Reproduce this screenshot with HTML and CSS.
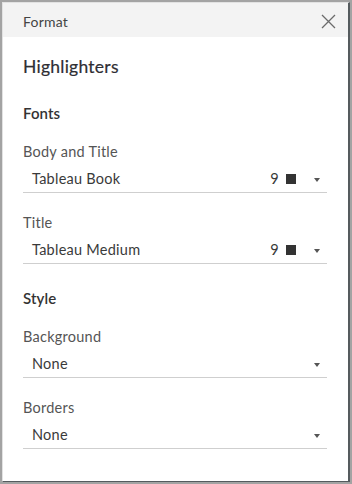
FILE: index.html
```html
<!DOCTYPE html>
<html lang="en">
<head>
  <meta charset="UTF-8" />
  <title>Format</title>
  <link rel="stylesheet" href="styles.css">
</head>
<body>

<div class="panel">
  <div class="header">
    <span class="header-title">Format</span>
    <button class="close-btn" title="Close">
      <svg width="15" height="15" viewBox="0 0 15 15"><path d="M1 1 L14 14 M14 1 L1 14" stroke="#6b6b6b" stroke-width="1.3" fill="none"/></svg>
    </button>
  </div>

  <div class="content">
    <h1>Highlighters</h1>

    <h2>Fonts</h2>

    <div class="field">
      <label>Body and Title</label>
      <div class="dropdown">
        <span class="value">Tableau Book</span>
        <span class="size">9</span>
        <span class="swatch"></span>
        <span class="caret"></span>
      </div>
    </div>

    <div class="field">
      <label>Title</label>
      <div class="dropdown">
        <span class="value">Tableau Medium</span>
        <span class="size">9</span>
        <span class="swatch"></span>
        <span class="caret"></span>
      </div>
    </div>

    <h2>Style</h2>

    <div class="field">
      <label>Background</label>
      <div class="dropdown">
        <span class="value">None</span>
        <span class="caret"></span>
      </div>
    </div>

    <div class="field">
      <label>Borders</label>
      <div class="dropdown">
        <span class="value">None</span>
        <span class="caret"></span>
      </div>
    </div>
  </div>
</div>

</body>
</html>
```

FILE: styles.css
```css
html { background: #a3a3a3; }
body { margin: 0; padding: 2px 2px 2px 2px; font-family: Lato, "Open Sans", sans-serif; color: #333; }

.panel {
  background: #fff; height: 480px; box-sizing: border-box;
  border-left: 1px solid #e2e2e2; border-top: 1px solid #e2e2e2;
  border-right: 2px solid #555b5e; border-bottom: 1px solid #555b5e;
  box-shadow: inset -1px 0 0 #fff;
}

.header {
  height: 34px; background: #f3f3f3;
  display: flex; align-items: center; justify-content: space-between;
  padding: 3px 12px 0 20px; box-sizing: border-box;
}
.header-title { font-size: 14px; line-height: 20px; color: #444; letter-spacing: 0.2px; }
.close-btn { border: none; background: none; padding: 0; width: 15px; height: 15px; cursor: pointer; display: flex; }

.content { padding: 0 21px 0 20px; }

h1 { margin: 18px 0 0; font-size: 17.5px; line-height: 24px; font-weight: normal; color: #2e2e33; letter-spacing: 0.25px; -webkit-text-stroke: 0.2px #2e2e33; }
h2 { margin: 24px 0 0; font-size: 15px; line-height: 20px; font-weight: 600; color: #333; letter-spacing: 0.1px; }

.field { margin-top: 20px; }
h2 + .field { margin-top: 19px; }
.field label { display: block; font-size: 14.5px; line-height: 20px; color: #555; letter-spacing: 0.25px; }

.dropdown {
  display: flex; align-items: center;
  margin-top: 7px; padding: 0 7px 3px 9px;
  border-bottom: 1px solid #cfcfcf;
  font-size: 14.5px; line-height: 20px; color: #3a3a3a; letter-spacing: 0.25px;
}
.dropdown .value { flex: 1; }
.size { margin-right: 7px; }
.swatch { width: 10px; height: 10px; background: #333; margin-right: 18px; }
.caret {
  width: 0; height: 0; margin-top: 1px;
  border-left: 3.5px solid transparent; border-right: 3.5px solid transparent;
  border-top: 4.5px solid #555;
}
```
